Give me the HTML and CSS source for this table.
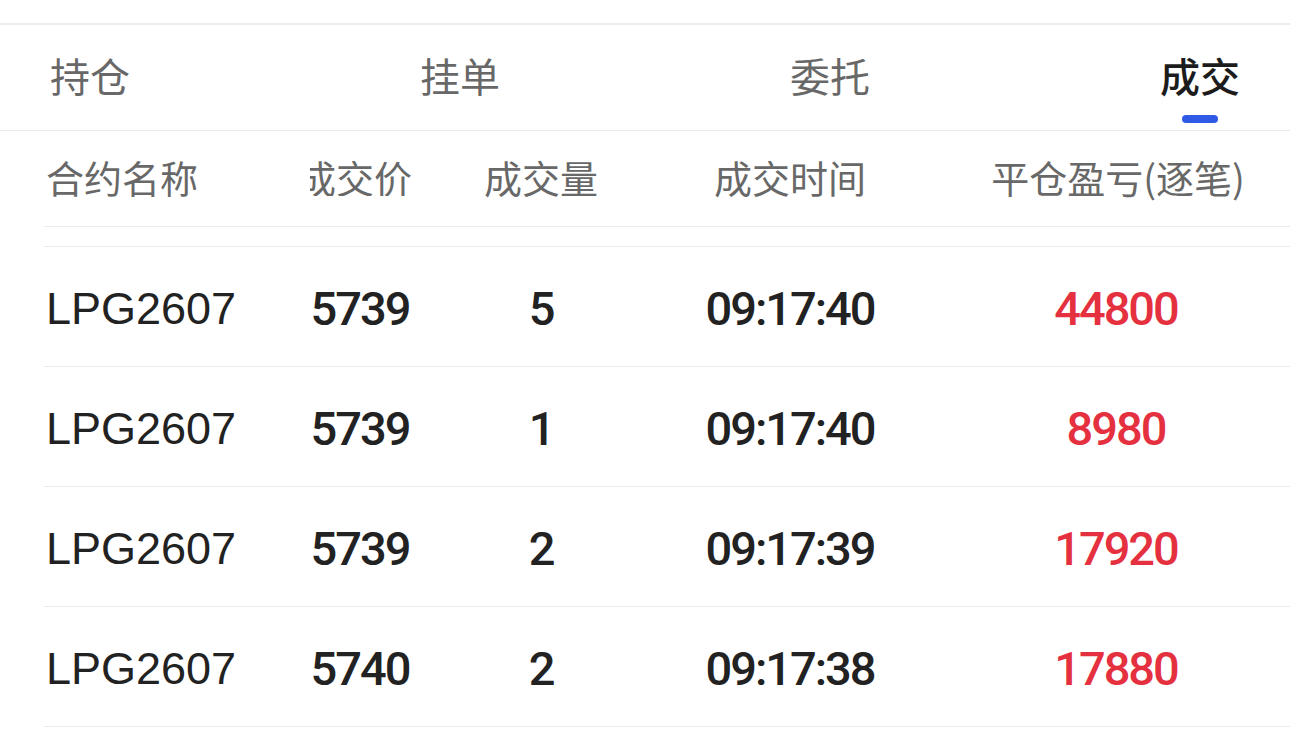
FILE: index.html
```html
<!DOCTYPE html>
<html lang="zh-CN">
<head>
<meta charset="utf-8">
<link rel="stylesheet" href="styles.css">
</head>
<body>
<div class="page">
  <div class="topgap"></div>
  <nav class="tabs">
    <div class="tab">持仓</div>
    <div class="tab">挂单</div>
    <div class="tab">委托</div>
    <div class="tab active">成交</div>
  </nav>
  <div class="table">
    <div class="row head">
      <div class="c c1">合约名称</div>
      <div class="c c2 clipcell"><span class="clip"><span>成交价</span></span></div>
      <div class="c c3">成交量</div>
      <div class="c c4">成交时间</div>
      <div class="c c5">平仓盈亏(逐笔)</div>
    </div>
    <div class="spacer"></div>
    <div class="row data">
      <div class="c c1 code">LPG2607</div>
      <div class="c c2">5739</div>
      <div class="c c3">5</div>
      <div class="c c4">09:17:40</div>
      <div class="c c5 red">44800</div>
    </div>
    <div class="row data">
      <div class="c c1 code">LPG2607</div>
      <div class="c c2">5739</div>
      <div class="c c3">1</div>
      <div class="c c4">09:17:40</div>
      <div class="c c5 red">8980</div>
    </div>
    <div class="row data">
      <div class="c c1 code">LPG2607</div>
      <div class="c c2">5739</div>
      <div class="c c3">2</div>
      <div class="c c4">09:17:39</div>
      <div class="c c5 red">17920</div>
    </div>
    <div class="row data">
      <div class="c c1 code">LPG2607</div>
      <div class="c c2">5740</div>
      <div class="c c3">2</div>
      <div class="c c4">09:17:38</div>
      <div class="c c5 red">17880</div>
    </div>
  </div>
</div>
</body>
</html>
```
FILE: styles.css
```css
* { box-sizing: border-box; }
html, body { margin: 0; padding: 0; background: #fff; }
body {
  width: 1290px;
  height: 742px;
  overflow: hidden;
  font-family: "Noto Sans CJK SC", "Noto Sans", sans-serif;
}
.topgap {
  height: 25px;
  border-bottom: 2px solid #ececec;
}
.tabs {
  display: flex;
  justify-content: space-between;
  align-items: center;
  height: 106px;
  padding: 0 50px;
  border-bottom: 1px solid #e9e9e9;
}
.tab {
  position: relative;
  font-size: 40px;
  line-height: 1;
  color: #686868;
  padding-bottom: 6px;
}
.tab.active {
  color: #1c1c1c;
  font-weight: 500;
}
.tab.active::after {
  content: "";
  position: absolute;
  left: 50%;
  top: 60px;
  width: 36px;
  height: 8px;
  margin-left: -18px;
  border-radius: 4px;
  background: #2f5ae5;
}
.table {
  padding-left: 44px;
}
.row {
  display: grid;
  grid-template-columns: 226px 180px 182px 316px 1fr;
  align-items: center;
  border-bottom: 1px solid #ebebeb;
}
.row.head {
  height: 96px;
  font-size: 38px;
  color: #686868;
  padding-bottom: 4px;
}
.spacer {
  height: 20px;
  border-bottom: 1px solid #ebebeb;
}
.row.data {
  height: 120px;
  font-family: Roboto, "Liberation Sans", sans-serif;
  font-size: 47px;
  font-weight: 500;
  letter-spacing: -2px;
  color: #222;
  padding-top: 3px;
}
.c {
  display: flex;
  justify-content: center;
  white-space: nowrap;
  line-height: 1;
}
.c1 {
  justify-content: flex-start;
  padding-left: 2px;
}
.code {
  font-family: "Liberation Sans", Arial, sans-serif;
  font-size: 45px;
  font-weight: 400;
  letter-spacing: 0;
  padding-left: 2px;
}
.c5 { padding-right: 2px; }
.row.data .c5 { padding-right: 6px; }
.clipcell { justify-content: flex-start; }
.clip {
  display: flex;
  justify-content: flex-end;
  overflow: hidden;
  margin-left: 40px;
  width: 102px;
}
.clip > span { flex: none; }
.red { color: #e5303f; }
```
